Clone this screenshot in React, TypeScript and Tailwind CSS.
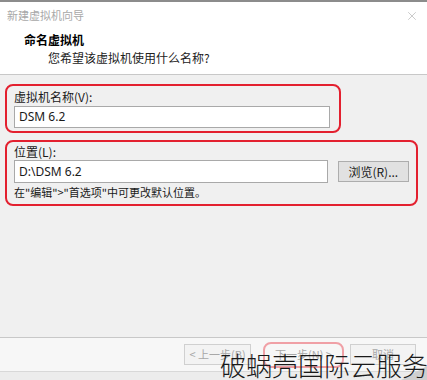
import { X } from "lucide-react"

const cjk = "font-['Microsoft_YaHei','Noto_Sans_CJK_SC',sans-serif]"

export default function App() {
  return (
    <div className={`relative flex h-[380px] w-[427px] flex-col overflow-hidden bg-[#f0f0f0] text-[12px] text-[#1a1a1a] ${cjk}`}>
      {/* title bar */}
      <div className="flex h-[29px] items-center justify-between border-t-2 border-[#8c8c8c] bg-white pl-[7px] pr-[8px]">
        <span className="text-[11px] text-[#a8a8a8]">新建虚拟机向导</span>
        <X className="h-[14px] w-[14px] text-[#b4b4b4]" strokeWidth={1.2} />
      </div>

      {/* header */}
      <div className="h-[46px] border-b border-[#c8c8c8] bg-white pl-[24px] pt-[2px]">
        <div className="text-[12px] font-bold leading-[18px] text-black">命名虚拟机</div>
        <div className="pl-[24px] text-[12px] leading-[17px] text-[#222]">您希望该虚拟机使用什么名称?</div>
      </div>

      {/* body */}
      <div className="flex flex-col gap-[7px] px-[5px] pt-[9px]">
        <div className="w-[336px] rounded-[8px] border-2 border-[#e3202f] px-[7px] pb-[3px] pt-[2px]">
          <div className="leading-[18px]">虚拟机名称(V):</div>
          <div className="flex h-[22px] w-[316px] items-center border border-[#a9a9a9] bg-white px-[4px] font-['Noto_Sans','Noto_Sans_CJK_SC',sans-serif] text-[12px]">
            DSM 6.2
          </div>
        </div>

        <div className="w-[413px] rounded-[8px] border-2 border-[#e3202f] px-[7px] pb-[3px] pt-[1px]">
          <div className="leading-[17px]">位置(L):</div>
          <div className="flex items-center gap-[10px]">
            <div className="flex h-[23px] w-[316px] items-center border border-[#a9a9a9] bg-white px-[4px] font-['Noto_Sans','Noto_Sans_CJK_SC',sans-serif] text-[12px]">
              D:\DSM 6.2
            </div>
            <div className="flex h-[21px] w-[72px] items-center justify-center border border-[#adadad] bg-[#e1e1e1] text-[12px]">
              浏览(R)...
            </div>
          </div>
          <div className="mt-[1px] text-[11px] leading-[17px]">在"编辑"&gt;"首选项"中可更改默认位置。</div>
        </div>
      </div>

      <div className="flex-1" />

      {/* footer */}
      <div className="flex h-[34px] items-center gap-[6px] border-t border-[#c8c8c8] bg-[#f7f7f7] pl-[184px]">
        <div className="flex h-[21px] w-[67px] items-center justify-center border border-[#d0d0d0] bg-[#f3f3f3] text-[11px] text-[#a8a8a8]">
          &lt; 上一步(B)
        </div>
        <div className="ml-[6px] flex h-[26px] w-[81px] items-center justify-center rounded-[8px] border-2 border-[#f0a0a6] text-[11px] text-[#a8a8a8]">
          下一步(N) &gt;
        </div>
        <div className="flex h-[21px] w-[66px] items-center justify-center border border-[#d0d0d0] bg-[#f3f3f3] text-[11px] text-[#a8a8a8]">
          取消
        </div>
      </div>
      <div className="h-[9px] border-t border-[#d8d8d8] bg-[#ececec]" />

      {/* corner shade */}
      <svg className="absolute bottom-0 right-0" width="40" height="14" viewBox="0 0 40 14">
        <polygon points="40,0 40,14 14,14" fill="#cfcfcf" />
      </svg>

      {/* watermark */}
      <div className="absolute bottom-[-4px] right-[-1px] font-['Noto_Sans_CJK_SC',sans-serif] text-[26px] font-light leading-[38px] text-[#1a1a1a]">
        破蜗壳国际云服务
      </div>
    </div>
  )
}
